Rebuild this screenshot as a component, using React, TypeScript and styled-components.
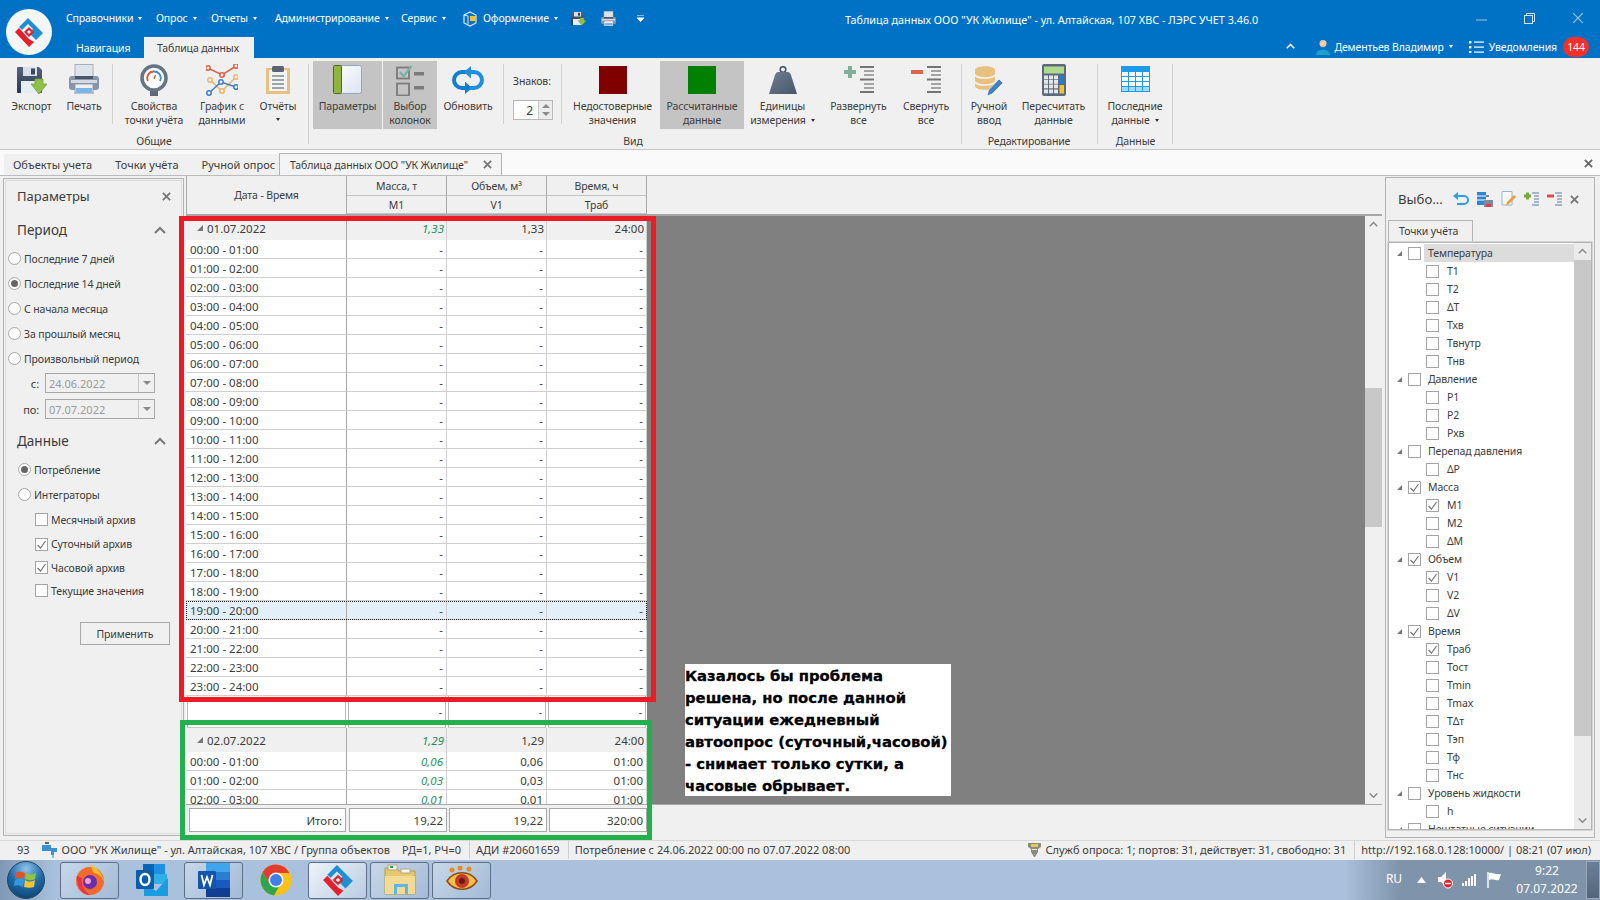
import React from 'react'
import styled, { createGlobalStyle } from 'styled-components'

const GlobalStyle = createGlobalStyle`
  html, body { margin: 0; padding: 0; background: #f0f0f0; }
  body { font-family: "Noto Sans", "Liberation Sans", sans-serif; font-size: 10.5px; letter-spacing: -0.12px; color: #3c3c3c; }
  * { box-sizing: border-box; }
`

const Root = styled.div`
  position: relative;
  width: 1600px;
  height: 900px;
  overflow: hidden;
  display: flex;
  flex-direction: column;
`

/* ---------- title bar ---------- */

const TitleBar = styled.header`
  position: relative;
  height: 58px;
  flex: none;
  background: #0072c6;
  color: #fff;
  display: flex;
  flex-direction: column;
`

const LogoCircle = styled.div`
  position: absolute;
  left: 6px;
  top: 9px;
  width: 46px;
  height: 46px;
  border-radius: 50%;
  background: #f4f6f8;
  display: flex;
  align-items: center;
  justify-content: center;
`

const TopRow = styled.div`
  height: 37px;
  display: flex;
  align-items: center;
  padding-left: 66px;
  position: relative;
`

const MenuItem = styled.span<{ $w: number }>`
  width: ${p => p.$w}px;
  flex: none;
  white-space: nowrap;
  padding-bottom: 1px;
`

const Caret = styled.i`
  display: inline-block;
  margin-left: 5px;
  vertical-align: 2px;
  border-left: 2.5px solid transparent;
  border-right: 2.5px solid transparent;
  border-top: 3px solid currentColor;
`

const QatIcon = styled.span<{ $w: number }>`
  width: ${p => p.$w}px;
  flex: none;
  display: flex;
  align-items: center;
`

const WindowTitle = styled.div`
  position: absolute;
  left: 845px;
  top: 12px;
  white-space: nowrap;
  font-size: 10.8px;
  letter-spacing: 0;
`

const WindowButtons = styled.div`
  position: absolute;
  right: 16px;
  top: 12px;
  display: flex;
  gap: 37px;
  align-items: center;
`

const TabRow = styled.div`
  height: 21px;
  display: flex;
  align-items: flex-end;
  padding-left: 76px;
`

const RibbonTab = styled.div<{ $active?: boolean }>`
  height: 21px;
  line-height: 23px;
  padding: 0 13px;
  margin-left: ${p => (p.$active ? '14px' : '0')};
  ${p => (p.$active ? 'background: #f0f0f0; color: #3c3c3c; width: 110px;' : 'padding: 0; color: #fff; width: 54px;')}
  white-space: nowrap;
`

const UserArea = styled.div`
  margin-left: auto;
  height: 21px;
  display: flex;
  align-items: center;
  padding-right: 11px;
  position: relative;
  top: -1px;
  white-space: nowrap;
`

const Spacer = styled.span<{ $w: number }>`
  width: ${p => p.$w}px;
  flex: none;
`

const Badge = styled.span`
  width: 26px;
  height: 20px;
  border-radius: 10px;
  background: #f3302a;
  color: #fff;
  text-align: center;
  line-height: 20px;
  margin-left: 6px;
`

/* ---------- ribbon ---------- */

const Ribbon = styled.section`
  height: 92px;
  flex: none;
  background: #f0f0f0;
  display: flex;
  padding-left: 4px;
  border-bottom: 1px solid #c6c6c6;
`

const RibbonGroup = styled.div<{ $w: number }>`
  width: ${p => p.$w}px;
  flex: none;
  position: relative;
  display: flex;
  flex-direction: column;
  &::after {
    content: '';
    position: absolute;
    right: 0;
    top: 6px;
    height: 80px;
    width: 1px;
    background: #d2d2d2;
  }
`

const GroupItems = styled.div`
  height: 71px;
  padding-top: 3px;
  display: flex;
  align-items: stretch;
`

const GroupLabel = styled.div<{ $pr?: number }>`
  text-align: center;
  line-height: 14px;
  margin-top: 5px;
  padding-right: ${p => p.$pr ?? 0}px;
`

const RibbonItem = styled.div<{ $w: number; $active?: boolean; $ml?: number }>`
  width: ${p => p.$w}px;
  margin-left: ${p => p.$ml ?? 0}px;
  flex: none;
  height: 68px;
  display: flex;
  flex-direction: column;
  align-items: center;
  background: ${p => (p.$active ? '#c4c4c4' : 'transparent')};
  text-align: center;
  line-height: 13.5px;
  white-space: nowrap;
`

const ItemIcon = styled.div<{ $pt?: number }>`
  height: 39px;
  flex: none;
  display: flex;
  align-items: flex-start;
  padding-top: ${p => p.$pt ?? 3}px;
`

const ItemSeparator = styled.div<{ $ml: number; $mr: number }>`
  width: 1px;
  height: 60px;
  margin: 3px ${p => p.$mr}px 0 ${p => p.$ml}px;
  background: #d2d2d2;
  flex: none;
`

const SignsBox = styled.div`
  width: 47px;
  padding: 13px 0 0 4px;
  flex: none;
  line-height: 14px;
`

const SpinBox = styled.div`
  margin: 12px 0 0 0;
  width: 40px;
  height: 20px;
  border: 1px solid #b8b8b8;
  background: #fff;
  display: flex;
`

const SpinValue = styled.span`
  flex: 1;
  text-align: right;
  padding-right: 5px;
  font-size: 12px;
  line-height: 19px;
`

const SpinArrows = styled.div`
  width: 14px;
  border-left: 1px solid #c8c8c8;
  background: #ececec;
  display: flex;
  flex-direction: column;
  align-items: center;
  justify-content: space-evenly;
`

const Arrow = styled.i<{ $down?: boolean }>`
  display: block;
  border-left: 4px solid transparent;
  border-right: 4px solid transparent;
  ${p => (p.$down ? 'border-top: 4px solid #8a8a8a;' : 'border-bottom: 4px solid #8a8a8a;')}
`

const Square = styled.div<{ $c: string }>`
  width: 28px;
  height: 28px;
  background: ${p => p.$c};
`

/* ---------- document tabs ---------- */

const DocTabs = styled.nav`
  height: 25px;
  flex: none;
  background: #fafafa;
  display: flex;
  align-items: flex-end;
  padding-left: 4px;
  position: relative;
`

const InactiveTabs = styled.div`
  height: 21px;
  width: 275px;
  background: #f0f0f0;
  display: flex;
  align-items: center;
  padding-left: 9px;
  gap: 23px;
  white-space: nowrap;
  font-size: 11px;
  letter-spacing: 0;
`

const ActiveTab = styled.div`
  height: 22px;
  width: 223px;
  background: #f4f4f4;
  border: 1px solid #b4b4b4;
  border-bottom: none;
  display: flex;
  align-items: center;
  padding-left: 10px;
  white-space: nowrap;
  justify-content: space-between;
  padding-right: 9px;
`

const BarClose = styled.span`
  position: absolute;
  right: 7px;
  top: 9px;
  display: flex;
`

/* ---------- main area ---------- */

const Main = styled.main`
  height: 665px;
  flex: none;
  display: flex;
  border-top: 1px solid #bcbcbc;
  background: #f0f0f0;
`

const ParamsPanel = styled.aside`
  width: 181px;
  margin: 2px 2px 4px 3px;
  flex: none;
  border: 1px solid #b4b4b4;
  outline: 1px solid #dcdcdc;
  outline-offset: -3px;
`

const PanelTitle = styled.div`
  height: 34px;
  display: flex;
  align-items: center;
  justify-content: space-between;
  padding: 0 12px 0 13px;
  font-size: 13px;
  letter-spacing: 0;
`

const SectionHead = styled.div<{ $mt?: number }>`
  height: 30px;
  margin-top: ${p => p.$mt ?? 0}px;
  display: flex;
  align-items: center;
  justify-content: space-between;
  padding: 0 17px 2px 13px;
  font-size: 13.5px;
  letter-spacing: 0;
`

const OptionRow = styled.div<{ $h?: number; $pl: number }>`
  height: ${p => p.$h ?? 25}px;
  padding-left: ${p => p.$pl}px;
  display: flex;
  align-items: center;
  gap: 3px;
  white-space: nowrap;
`

const Radio = styled.span<{ $on?: boolean }>`
  width: 13px;
  height: 13px;
  border-radius: 50%;
  border: 1px solid #a8a8a8;
  background: #fff;
  flex: none;
  display: flex;
  align-items: center;
  justify-content: center;
  &::after {
    content: '';
    width: 7px;
    height: 7px;
    border-radius: 50%;
    background: ${p => (p.$on ? '#666' : 'transparent')};
  }
`

const Box = styled.span`
  width: 13px;
  height: 13px;
  border: 1px solid #a4a4a4;
  background: #fff;
  flex: none;
  display: flex;
  align-items: center;
  justify-content: center;
`

const DateRow = styled.div<{ $mt: number }>`
  margin-top: ${p => p.$mt}px;
  height: 20px;
  display: flex;
  align-items: center;
  justify-content: flex-end;
  gap: 6px;
  padding-right: 28px;
  font-size: 11px;
`

const DateInput = styled.div`
  width: 110px;
  height: 20px;
  border: 1px solid #a8a8a8;
  display: flex;
  align-items: center;
  padding-left: 3px;
  color: #9a9a9a;
  background: #f0f0f0;
  font-size: 11px;
  letter-spacing: 0;
`

const DateDrop = styled.span`
  margin-left: auto;
  width: 16px;
  height: 18px;
  border-left: 1px solid #c8c8c8;
  display: flex;
  align-items: center;
  justify-content: center;
`

const ApplyButton = styled.button`
  display: block;
  margin: 20px 0 0 76px;
  width: 90px;
  height: 23px;
  border: 1px solid #a8a8a8;
  background: #f0f0f0;
  font: inherit;
  letter-spacing: inherit;
  color: inherit;
`

/* ---------- data grid ---------- */

const GridPane = styled.section`
  width: 1196px;
  margin-bottom: 5px;
  flex: none;
  display: flex;
  flex-direction: column;
`

const GridHead = styled.div`
  height: 40px;
  flex: none;
  display: grid;
  grid-template-columns: 161px 100px 100px 100px 1fr;
  grid-template-rows: 20px 18px;
  border-bottom: 2px solid #a8a8a8;
  background: #f0f0f0;
`

const HeadCell = styled.div<{ $span?: boolean }>`
  ${p => (p.$span ? 'grid-row: span 2;' : '')}
  display: flex;
  align-items: center;
  justify-content: center;
  border-right: 1px solid #a8a8a8;
  border-bottom: ${p => (p.$span ? 'none' : '1px solid #c4c4c4')};
  border-left: ${p => (p.$span ? '1px solid #a8a8a8' : 'none')};
`

const HeadFill = styled.div`
  grid-row: span 2;
`

const GridBody = styled.div`
  flex: 1;
  display: flex;
  min-height: 0;
  background: #808080;
`

const RowsClip = styled.div`
  flex: 1;
  height: 588px;
  overflow: hidden;
`

const DataRow = styled.div<{ $kind?: 'group' | 'row' | 'current' | 'summary'; $h?: number }>`
  width: 461px;
  height: ${p => p.$h ?? 19}px;
  display: grid;
  grid-template-columns: 161px 100px 100px 100px;
  background: ${p => (p.$kind === 'group' ? '#f0f0f0' : p.$kind === 'current' ? '#e3f0f9' : '#fff')};
  ${p => (p.$kind === 'current' ? 'outline: 1px dotted #222; outline-offset: -1px;' : '')}
`

const Cell = styled.div<{ $first?: boolean; $kind?: string; $green?: boolean }>`
  display: flex;
  align-items: center;
  justify-content: ${p => (p.$first ? 'flex-start' : 'flex-end')};
  padding: ${p => (p.$first ? (p.$kind === 'group' ? '0 0 0 11px' : '0 0 0 4px') : p.$kind === 'group' ? '0 2px 0 0' : '0 3px 0 0')};
  border-right: 1px solid ${p => (p.$first ? '#a8a8a8' : '#d0d0d0')};
  border-bottom: ${p => (p.$kind === 'group' ? 'none' : '1px solid #cfcfcf')};
  color: ${p => (p.$green ? '#1f8f5f' : 'inherit')};
  font-style: ${p => (p.$green ? 'italic' : 'normal')};
  font-size: 11.5px;
  letter-spacing: 0;
  gap: 4px;
  white-space: nowrap;
`

const SummaryCell = styled.div`
  margin: 0 1px;
  border-left: 1px solid #b8b8b8;
  border-right: 1px solid #b8b8b8;
  border-bottom: 1px solid #c8c8c8;
  display: flex;
  align-items: center;
  justify-content: flex-end;
  padding-right: 3px;
`

const GroupArrow = styled.i`
  display: block;
  width: 0;
  height: 0;
  border-left: 6px solid transparent;
  border-bottom: 6px solid #777;
`

const VScroll = styled.div<{ $w: number; $bg?: string }>`
  width: ${p => p.$w}px;
  flex: none;
  background: ${p => p.$bg ?? '#f0f0f0'};
  display: flex;
  flex-direction: column;
  align-items: stretch;
`

const ScrollArrow = styled.div`
  height: 17px;
  display: flex;
  align-items: center;
  justify-content: center;
  flex: none;
`

const ScrollTrack = styled.div<{ $top: number; $h: number }>`
  flex: 1;
  padding-top: ${p => p.$top}px;
  & > div { height: ${p => p.$h}px; background: #c8c8c8; }
`

const GridFoot = styled.div`
  height: 31px;
  flex: none;
  background: #f0f0f0;
  border-top: 1px solid #a8a8a8;
  padding-top: 3px;
  display: flex;
`

const FootCell = styled.div<{ $w: number; $ml: number }>`
  width: ${p => p.$w}px;
  margin-left: ${p => p.$ml}px;
  height: 24px;
  background: #fff;
  border: 1px solid #a8a8a8;
  display: flex;
  align-items: center;
  justify-content: flex-end;
  padding-right: 3px;
  font-size: 11.5px;
  letter-spacing: 0;
`

/* ---------- right panel ---------- */

const ChooserPanel = styled.aside`
  width: 210px;
  margin: 1px 5px 2px 3px;
  flex: none;
  border: 1px solid #b4b4b4;
  display: flex;
  flex-direction: column;
  padding: 0 2px;
`

const ChooserHead = styled.div`
  height: 42px;
  flex: none;
  display: flex;
  align-items: center;
  padding-left: 10px;
  font-size: 13.2px;
  letter-spacing: 0;
  position: relative;
`

const ChooserTools = styled.div`
  position: absolute;
  left: 65px;
  top: 13px;
  display: flex;
  gap: 8px;
  align-items: center;
`

const ChooserTab = styled.div`
  width: 85px;
  height: 22px;
  border: 1px solid #b4b4b4;
  border-bottom: none;
  padding-left: 10px;
  line-height: 21px;
  flex: none;
`

const TreeFrame = styled.div`
  height: 588px;
  flex: none;
  border: 1px solid #b4b4b4;
  outline: 1px solid #d4d4d4;
  background: #fff;
  display: flex;
  overflow: hidden;
`

const TreeRows = styled.div`
  flex: 1;
  padding-top: 1px;
  overflow: hidden;
`

const TreeRow = styled.div<{ $child?: boolean; $sel?: boolean }>`
  height: 18px;
  display: flex;
  align-items: center;
  padding-left: ${p => (p.$child ? '37px' : '8px')};
  white-space: nowrap;
  & > b {
    font-weight: normal;
    flex: 1;
    padding-left: ${p => (p.$sel ? '4px' : '0')};
    margin-left: ${p => (p.$sel ? '3px' : p.$child ? '8px' : '7px')};
    line-height: 18px;
    background: ${p => (p.$sel ? '#dcdcdc' : 'transparent')};
  }
`

const TreeArrow = styled(GroupArrow)`
  border-left-width: 5px;
  border-bottom-width: 5px;
  margin-right: 6px;
`

/* ---------- status + task bar ---------- */

const StatusBar = styled.footer`
  height: 20px;
  flex: none;
  background: #f0f0f0;
  border-top: 1px solid #d8d8d8;
  display: flex;
  align-items: center;
  white-space: nowrap;
  padding: 0 9px 2px 0;
  font-size: 11px;
  letter-spacing: 0;
`

const StatusItem = styled.span<{ $ml?: number; $sep?: boolean; $push?: boolean }>`
  margin-left: ${p => (p.$push ? 'auto' : `${p.$ml ?? 0}px`)};
  flex: none;
  display: flex;
  align-items: center;
  gap: 5px;
  height: 19px;
  ${p => (p.$sep ? 'border-left: 1px solid #cfcfcf; padding-left: 6px;' : '')}
`

const Taskbar = styled.div`
  height: 40px;
  flex: none;
  background: linear-gradient(to right, #7e98b6 0, #a9c1dc 56px, #a9c1dc 1345px, #7f93ab 1400px);
  position: relative;
  display: flex;
  align-items: center;
`

const StartOrb = styled.div`
  width: 60px;
  flex: none;
  display: flex;
  justify-content: center;
  padding-right: 9px;
`

const TaskButton = styled.div<{ $bare?: boolean; $lit?: boolean }>`
  width: 59px;
  height: 37px;
  margin-right: 3px;
  flex: none;
  border-radius: 3px;
  display: flex;
  align-items: center;
  justify-content: center;
  ${p =>
    p.$bare
      ? ''
      : `border: 1px solid #5d6f86; background: linear-gradient(135deg, ${p.$lit ? '#eef3f9, #b9cde3' : '#c7d7e9, #a3bbd6'});`}
`

const Tray = styled.div`
  margin-left: auto;
  display: flex;
  align-items: center;
  color: #fff;
  height: 40px;
`

const TrayLang = styled.span`
  font-size: 12px;
  margin: -4px 15px 0 0;
`

const TrayArrow = styled.svg`
  margin-right: 11px;
`

const TrayClock = styled.div`
  width: 78px;
  text-align: center;
  line-height: 18px;
  font-size: 12px;
  letter-spacing: 0;
`

const ShowDesktop = styled.div`
  width: 14px;
  height: 38px;
  background: linear-gradient(#6b7f97, #54667c);
  border: 1px solid #9aaabc;
`

/* ---------- overlays ---------- */

const Frame = styled.div<{ $c: string; $l: number; $t: number; $w: number; $h: number }>`
  position: absolute;
  left: ${p => p.$l}px;
  top: ${p => p.$t}px;
  width: ${p => p.$w}px;
  height: ${p => p.$h}px;
  border: 5px solid ${p => p.$c};
  pointer-events: none;
`

const Note = styled.div`
  position: absolute;
  left: 685px;
  top: 664px;
  width: 266px;
  height: 132px;
  padding-top: 1px;
  background: #fff;
  color: #000;
  font-family: "DejaVu Sans", "Liberation Sans", sans-serif;
  font-weight: 700;
  font-size: 14.8px;
  letter-spacing: 0;
  line-height: 22px;
  white-space: pre;
  -webkit-text-stroke: 0.3px #000;
`

/* ---------- icons ---------- */

const LersMark = ({ s = 30 }: { s?: number }) => (
  <svg width={s} height={s} viewBox="0 0 30 30">
    <path d="M14 1 L29 16 L22 23 L15 16 L19 12 L14 7 L8 13 L5 10 Z" fill="#1e8fd0" />
    <path d="M1 15 L5 11 L15 22 L20 25 L15 30 Z" fill="#e4202c" />
    <path d="M15 10 L20 15 L15 20 L10 15 Z" fill="#e4202c" />
    <path d="M15 13 L17 15 L15 17 L13 15 Z" fill="#fff" />
  </svg>
)

const FloppyIcon = ({ s = 30 }: { s?: number }) => (
  <svg width={s} height={s * 0.9} viewBox="0 0 30 27">
    <defs>
      <linearGradient id="fl" x1="0" x2="0" y1="0" y2="1">
        <stop offset="0" stopColor="#56627a" />
        <stop offset="1" stopColor="#2c3850" />
      </linearGradient>
    </defs>
    <path d="M0 1 Q0 0 1 0 H22 L25 3 V25 Q25 26 24 26 H1 Q0 26 0 25 Z" fill="url(#fl)" />
    <rect x="6" y="0" width="14" height="9" fill="#d8dfe8" />
    <rect x="14" y="1.5" width="4" height="6" fill="#3c4860" />
    <rect x="4" y="14" width="17" height="12" fill="#e7edf5" />
    <path d="M18 12 H26 V17 H30 L22 27 L14 17 H18 Z" fill="#8fc04a" stroke="#76a338" strokeWidth=".8" />
  </svg>
)

const PrinterIcon = ({ s = 30 }: { s?: number }) => (
  <svg width={s} height={s} viewBox="0 0 30 30">
    <rect x="6" y="0.5" width="18" height="13" fill="#dde3ea" stroke="#a6b0bd" />
    <rect x="0" y="12" width="30" height="14" rx="3" fill="#8a96a8" />
    <rect x="6" y="12" width="18" height="3" fill="#4c5668" />
    <rect x="2" y="16" width="26" height="3" fill="#d3d9e2" />
    <rect x="6" y="20" width="18" height="10" fill="#eef2f6" stroke="#8d98a6" />
    <rect x="7" y="24" width="16" height="5" fill="#7db5e4" />
  </svg>
)

const GaugeIcon = () => (
  <svg width="28" height="32" viewBox="0 0 28 32">
    <path d="M10 24 H18 V32 H10 Z" fill="#5c6978" />
    <circle cx="14" cy="14" r="12" fill="#fff" stroke="#667483" strokeWidth="3.5" />
    <path d="M8 17 A6.5 6.5 0 0 1 14 7.5" fill="none" stroke="#e0563c" strokeWidth="1.8" />
    <path d="M14 7.5 A6.5 6.5 0 0 1 20 17" fill="none" stroke="#3f8ecb" strokeWidth="1.8" />
    <path d="M14 15 L15.5 11" stroke="#d05a44" strokeWidth="1.4" />
  </svg>
)

const ChartIcon = () => (
  <svg width="32" height="32" viewBox="0 0 32 32" fill="none" strokeWidth="1.5">
    <path d="M2 4 L16 11 L30 2" stroke="#dd6245" />
    <path d="M4 16 L16 27 L30 13" stroke="#efb469" />
    <path d="M3 29 L15 18 L30 23" stroke="#3f7fbf" />
    {[[4, 16], [16, 27], [30, 13]].map(([x, y]) => <circle key={x} cx={x} cy={y} r="2.2" fill="#f0f0f0" stroke="#efb469" />)}
    {[[2, 4], [16, 11], [30, 2]].map(([x, y]) => <circle key={x} cx={x} cy={y} r="2.2" fill="#f0f0f0" stroke="#dd6245" />)}
    {[[3, 29], [15, 18], [30, 23]].map(([x, y]) => <circle key={x} cx={x} cy={y} r="2.2" fill="#f0f0f0" stroke="#3f7fbf" />)}
  </svg>
)

const ClipboardIcon = () => (
  <svg width="24" height="28" viewBox="0 0 24 28">
    <rect x="0" y="2" width="24" height="26" fill="#e9c07f" />
    <rect x="3" y="4" width="18" height="21" fill="#f4f4f2" />
    <rect x="6" y="0" width="12" height="6" rx="1.5" fill="#5b6572" />
    <path d="M6 10 H18 M6 14 H18 M6 18 H18 M6 22 H18" stroke="#7f8994" strokeWidth="1.6" />
  </svg>
)

const PanelIcon = () => (
  <svg width="29" height="29" viewBox="0 0 29 29">
    <defs>
      <linearGradient id="pn" x1="0" x2="1" y1="0" y2="1">
        <stop offset="0" stopColor="#ffffff" />
        <stop offset="1" stopColor="#dbe4f2" />
      </linearGradient>
    </defs>
    <rect x="0.5" y="0.5" width="28" height="28" rx="2" fill="url(#pn)" stroke="#94a8c6" />
    <rect x="0.5" y="0.5" width="8" height="28" rx="1" fill="#8fb53e" stroke="#4f6a20" />
  </svg>
)

const ColumnsIcon = () => (
  <svg width="28" height="31" viewBox="0 0 28 31" fill="none">
    <rect x="1" y="2.5" width="12" height="11" stroke="#7a7a7a" strokeWidth="1.8" />
    <path d="M4 7 L7.5 11.5 L15.5 1" stroke="#79b0a6" strokeWidth="2.2" />
    <rect x="18" y="7" width="10" height="3.5" fill="#7a7a7a" />
    <rect x="1" y="18.5" width="12" height="12" stroke="#7a7a7a" strokeWidth="1.8" />
    <rect x="18" y="21" width="10" height="3.5" fill="#7a7a7a" />
  </svg>
)

const RefreshIcon = () => (
  <svg width="32" height="28" viewBox="0 0 32 28" fill="none">
    <path d="M14 6 H10 A8 8 0 0 0 10 22 H14" stroke="#0f7fd1" strokeWidth="4" />
    <path d="M13 15.5 L20 22 L13 28 Z" fill="#0f7fd1" />
    <path d="M18 22 H22 A8 8 0 0 0 22 6 H18" stroke="#1f90e0" strokeWidth="4" />
    <path d="M19 0 L12 6 L19 12.5 Z" fill="#1f90e0" />
  </svg>
)

const WeightIcon = () => (
  <svg width="28" height="28" viewBox="0 0 28 28">
    <defs>
      <linearGradient id="wg" x1="0" x2="1" y1="0" y2="1">
        <stop offset="0" stopColor="#6f7f90" />
        <stop offset="1" stopColor="#47566a" />
      </linearGradient>
    </defs>
    <circle cx="14" cy="3.5" r="2.8" fill="none" stroke="#4c5664" strokeWidth="1.6" />
    <path d="M9 6 H19 Q21 6 22 9 L28 28 H0 L6 9 Q7 6 9 6 Z" fill="url(#wg)" />
  </svg>
)

const LinesIcon = ({ minus }: { minus?: boolean }) => (
  <svg width="30" height="27" viewBox="0 0 30 27">
    {minus
      ? <rect x="0" y="4" width="12" height="4" fill="#dc6647" />
      : <path d="M4 0 H8 V4 H12 V8 H8 V12 H4 V8 H0 V4 H4 Z" fill="#7fb09c" />}
    {[0, 12.5, 25].map(y => <rect key={y} x="16" y={y} width="14" height="2" fill="#747474" />)}
    {[4, 8, 17, 21].map(y => <rect key={y} x="20" y={y} width="10" height="2" fill="#a4a4a4" />)}
  </svg>
)

const DbPencilIcon = () => (
  <svg width="28" height="30" viewBox="0 0 28 30">
    <path d="M0 4 C0 -1 20 -1 20 4 V20 C20 25 0 25 0 20 Z" fill="#e8c17f" />
    <path d="M0 9 C3 13 17 13 20 9 M0 16 C3 20 17 20 20 16" stroke="#f4f4f0" strokeWidth="1.6" fill="none" />
    <path d="M12 30 L13.5 24 L24 13 L28 17 L17 28 Z" fill="#3f82c4" stroke="#f0f0f0" strokeWidth=".8" />
  </svg>
)

const CalcIcon = () => (
  <svg width="24" height="32" viewBox="0 0 24 32">
    <rect width="24" height="32" rx="2" fill="#5c6a7a" />
    <rect x="2" y="2.5" width="20" height="7" fill="#aedb8e" />
    {[11.5, 16, 20.5, 25.5].map(y => [2, 7, 12].map(x => <rect key={x + '-' + y} x={x} y={y} width="4" height="3.8" fill="#e3e7ec" />))}
    <rect x="17.5" y="11.5" width="4.5" height="4" fill="#1d7fd0" />
    <rect x="17.5" y="16" width="4.5" height="4" fill="#1d7fd0" />
    <rect x="17.5" y="21" width="4.5" height="8.5" fill="#f3c230" />
  </svg>
)

const TableIcon = () => (
  <svg width="29" height="26" viewBox="0 0 29 26">
    <rect width="29" height="26" fill="#1e9be8" />
    {[6, 11, 16, 21].map(y => [1, 8, 15, 22].map(x => <rect key={x + '-' + y} x={x} y={y} width="6" height="4" fill={y > 16 ? '#a7d8f7' : '#f6fbff'} />))}
  </svg>
)

const CloseCross = ({ s = 9, c = '#666', w = 2 }: { s?: number; c?: string; w?: number }) => (
  <svg width={s} height={s} viewBox="0 0 10 10">
    <path d="M1 1 L9 9 M9 1 L1 9" stroke={c} strokeWidth={w} />
  </svg>
)

const Chevron = ({ down, c = '#777', w = 12 }: { down?: boolean; c?: string; w?: number }) => (
  <svg width={w} height={w * 0.7} viewBox="0 0 12 8.4">
    <path d={down ? 'M1 2 L6 7 L11 2' : 'M1 7 L6 2 L11 7'} fill="none" stroke={c} strokeWidth="2" />
  </svg>
)

const Tick = () => (
  <svg width="11" height="11" viewBox="0 0 11 11">
    <path d="M1.5 6 L4.5 9 L9.5 2" fill="none" stroke="#777" strokeWidth="1.2" />
  </svg>
)

const UserIcon = () => (
  <svg width="14" height="16" viewBox="0 0 14 16">
    <circle cx="7" cy="4.5" r="3.5" fill="#f3c9a0" />
    <path d="M0 16 C0 9 14 9 14 16 Z" fill="#1ea0c8" />
  </svg>
)

const ListIcon = () => (
  <svg width="15" height="12" viewBox="0 0 15 12" fill="#fff">
    {[0, 5, 10].map(y => (
      <g key={y}>
        <rect x="0" y={y} width="2.4" height="2.4" />
        <rect x="5" y={y + 0.5} width="10" height="1.2" />
      </g>
    ))}
  </svg>
)

const ThemeIcon = () => (
  <svg width="16" height="16" viewBox="0 0 16 16" fill="none">
    <path d="M2 4 L8 1 L14 4 V12 L8 15 L2 12 Z" stroke="#dce9f5" strokeWidth="1.2" />
    <path d="M6 5 V13 M2 4 L6 5" stroke="#dce9f5" strokeWidth="1" />
    <rect x="8" y="5" width="6" height="5" fill="#f2c230" />
  </svg>
)

const QatDrop = () => (
  <svg width="7" height="7" viewBox="0 0 7 7">
    <path d="M0 0 H7 M0 3 H7 L3.5 6.5 Z" stroke="#fff" fill="#fff" />
  </svg>
)

const MinimizeGlyph = () => (
  <svg width="11" height="11" viewBox="0 0 11 11"><path d="M0 7 H11" stroke="#9cc6e6" /></svg>
)

const RestoreGlyph = () => (
  <svg width="11" height="11" viewBox="0 0 11 11" fill="none" stroke="#cfe2f2">
    <rect x=".5" y="2.5" width="8" height="8" />
    <path d="M2.5 2.5 V.5 H10.5 V8.5 H8.5" />
  </svg>
)

const TapIcon = () => (
  <svg width="15" height="16" viewBox="0 0 15 16">
    <path d="M0 3 H9 V6 H15 V10 H12 V13 H9 V9 H0 Z" fill="#3e90d6" />
    <rect x="3" y="0" width="4" height="2" fill="#56606e" />
    <rect x="10" y="13" width="2" height="3" fill="#7dc0ee" />
  </svg>
)

const PortIcon = () => (
  <svg width="13" height="15" viewBox="0 0 13 15">
    <path d="M0 1 H13 V5 L10 7 V10 L7 15 H6 L3 10 V7 L0 5 Z" fill="#8d8d7c" />
    <rect x="3" y="2" width="7" height="3" fill="#e3c75e" />
    <rect x="4" y="7" width="5" height="1" fill="#e8e8e0" />
  </svg>
)

const UndoIcon = () => (
  <svg width="16" height="14" viewBox="0 0 16 14" fill="none">
    <path d="M2 4 H11 A4 4 0 0 1 11 12 H4" stroke="#2d9fe8" strokeWidth="2" />
    <path d="M5 0 V8 L0 4 Z" fill="#2d9fe8" />
  </svg>
)

const StackSaveIcon = () => (
  <svg width="16" height="15" viewBox="0 0 16 15">
    <rect x="0" y="0" width="9" height="13" fill="#2f86d0" />
    <path d="M0 4 H9 M0 8 H9" stroke="#fff" />
    <rect x="9" y="3" width="3" height="2" fill="#7a8494" />
    <rect x="7" y="8" width="9" height="7" fill="#808a98" />
    <rect x="9" y="12" width="5" height="3" fill="#d9414a" />
  </svg>
)

const NoteIcon = () => (
  <svg width="15" height="16" viewBox="0 0 15 16">
    <path d="M1 .5 H11 V14 H1 Z" fill="#f8fafc" stroke="#9fb2c6" />
    <path d="M5 14 L6 11 L13 4 L15 6 L8 13 Z" fill="#e5a23a" />
  </svg>
)

const SmallLines = ({ minus }: { minus?: boolean }) => (
  <svg width="15" height="14" viewBox="0 0 15 14">
    {minus
      ? <rect x="0" y="2.5" width="7" height="3" fill="#e0484a" />
      : <path d="M2 0.5 H5 V2.5 H7 V5.5 H5 V7.5 H2 V5.5 H0 V2.5 H2 Z" fill="#76a83a" />}
    <path d="M8 1 H15 M10 4 H15 M10 7 H15 M10 10 H15 M8 13 H15" stroke="#5a7ca6" />
  </svg>
)

const WinOrb = () => (
  <svg width="38" height="38" viewBox="0 0 38 38">
    <defs>
      <radialGradient id="orb" cx="0.5" cy="0.2" r="0.9">
        <stop offset="0" stopColor="#8fc4ea" />
        <stop offset="0.5" stopColor="#1f6aa8" />
        <stop offset="1" stopColor="#0b3a66" />
      </radialGradient>
    </defs>
    <circle cx="19" cy="19" r="18.5" fill="url(#orb)" stroke="#27475f" />
    <path d="M9 12 C12 10 15 11 18 12 L17 18 C14 17 11 16 8 18 Z" fill="#e5512b" />
    <path d="M19 12 C22 14 25 14 29 12 L28 18 C25 20 21 19 18 18 Z" fill="#8cc63f" />
    <path d="M8 19 C11 17 14 18 17 19 L16 26 C13 24 10 24 7 25 Z" fill="#2f9ae0" />
    <path d="M18 19 C21 21 25 21 28 19 L27 26 C24 27 20 27 17 26 Z" fill="#f7c62f" />
  </svg>
)

const FirefoxIcon = () => (
  <svg width="30" height="32" viewBox="0 0 30 32">
    <circle cx="15" cy="17" r="14" fill="#f36a2c" />
    <path d="M15 0 C22 4 28 10 29 18 C27 12 22 9 19 9 C17 6 16 3 15 0 Z" fill="#fbc02d" />
    <path d="M2 12 C1 20 6 31 15 31 C9 27 6 20 7 14 Z" fill="#e8304f" />
    <circle cx="15" cy="18" r="7" fill="#6a2fb0" />
    <circle cx="13" cy="17" r="3" fill="#f2a0c8" />
  </svg>
)

const OutlookIcon = () => (
  <svg width="32" height="32" viewBox="0 0 32 32">
    <rect x="7" y="0" width="11" height="10" fill="#0a64b4" />
    <rect x="18" y="0" width="11" height="10" fill="#1e90e0" />
    <rect x="7" y="10" width="11" height="10" fill="#0f76c8" />
    <rect x="18" y="10" width="13" height="10" fill="#31b0e8" />
    <path d="M8 20 L20 27 L32 14 V32 H8 Z" fill="#1a9ce0" />
    <rect x="0" y="6" width="18" height="19" rx="1" fill="#0d5ea8" />
    <ellipse cx="9" cy="15.5" rx="4.5" ry="5.5" fill="none" stroke="#fff" strokeWidth="2.4" />
  </svg>
)

const WordIcon = () => (
  <svg width="32" height="34" viewBox="0 0 32 34">
    <rect x="8" y="0" width="24" height="9" fill="#41a5ee" />
    <rect x="8" y="9" width="24" height="8" fill="#2b7cd3" />
    <rect x="8" y="17" width="24" height="8" fill="#185abd" />
    <rect x="8" y="25" width="24" height="9" fill="#103f91" />
    <rect x="0" y="8" width="18" height="18" rx="1" fill="#1554a8" />
    <path d="M3.5 12 L6 22 L9 14 L12 22 L14.5 12" fill="none" stroke="#fff" strokeWidth="1.8" />
  </svg>
)

const ChromeIcon = () => (
  <svg width="32" height="32" viewBox="0 0 32 32">
    <circle cx="16" cy="16" r="15.5" fill="#fbc116" />
    <path d="M16 .5 A15.5 15.5 0 0 0 2.6 8.2 L9 19 L16 9 H29.4 A15.5 15.5 0 0 0 16 .5 Z" fill="#e33b2e" />
    <path d="M2.6 8.2 A15.5 15.5 0 0 0 14 31.4 L20.5 20 L9 19 Z" fill="#2fa44f" />
    <circle cx="16" cy="16" r="7.5" fill="#fff" />
    <circle cx="16" cy="16" r="6" fill="#3f7fe8" />
  </svg>
)

const FolderIcon = () => (
  <svg width="32" height="32" viewBox="0 0 32 32">
    <path d="M1 4 H13 L15 7 H31 V30 H1 Z" fill="#e8c86c" stroke="#b89a44" />
    <rect x="4" y="1" width="9" height="5" fill="#f6f6f0" stroke="#b0a88a" />
    <rect x="6" y="2" width="3" height="2" fill="#3aa23c" />
    <rect x="17" y="5" width="9" height="4" fill="#f6f6f0" stroke="#b0a88a" />
    <path d="M1 12 H31 V30 H1 Z" fill="#f2dc94" />
    <path d="M10 30 V20 H24 V30 H21 V23 H13 V30 Z" fill="#5fb4e8" />
  </svg>
)

const XnIcon = () => (
  <svg width="32" height="28" viewBox="0 0 32 28">
    <path d="M1 15 C8 4 24 4 31 15 C24 26 8 26 1 15 Z" fill="#f4c04a" stroke="#8a4a10" strokeWidth="1.5" />
    <circle cx="16" cy="15" r="7" fill="#c23a2a" />
    <circle cx="16" cy="15" r="3" fill="#6a1a14" />
    <circle cx="6" cy="4" r="2.5" fill="#e88a20" />
    <circle cx="14" cy="2" r="2.5" fill="#e88a20" />
    <circle cx="23" cy="3" r="2.5" fill="#e88a20" />
  </svg>
)

const SpeakerIcon = () => (
  <svg width="16" height="18" viewBox="0 0 16 18">
    <path d="M1 6 H4 L9 1 V15 L4 11 H1 Z" fill="#fff" />
    <circle cx="11" cy="12.5" r="4.5" fill="#e0202c" stroke="#fff" />
    <path d="M8 12.5 H14" stroke="#fff" strokeWidth="1.4" />
  </svg>
)

const SignalIcon = () => (
  <svg width="15" height="14" viewBox="0 0 15 14" fill="#fff">
    <rect x="0" y="10" width="2" height="3" />
    <rect x="3" y="8" width="2" height="5" />
    <rect x="6" y="5" width="2" height="8" />
    <rect x="9" y="3" width="2" height="10" />
    <rect x="12" y="1" width="2" height="12" />
  </svg>
)

const FlagIcon = () => (
  <svg width="15" height="16" viewBox="0 0 15 16">
    <path d="M1 0 V16" stroke="#fff" strokeWidth="1.4" />
    <path d="M2 1 C6 0 8 3 14 2 L12 8 C8 9 6 6 2 8 Z" fill="#fff" />
  </svg>
)

/* ---------- data ---------- */

type RowData = { time: string; m?: string; v?: string; t?: string; current?: boolean }

const hours: RowData[] = Array.from({ length: 24 }, (_, i) => ({
  time: `${String(i).padStart(2, '0')}:00 - ${String(i + 1).padStart(2, '0')}:00`,
  current: i === 19,
}))

const nextDay: RowData[] = [
  { time: '00:00 - 01:00', m: '0,06', v: '0,06', t: '01:00' },
  { time: '01:00 - 02:00', m: '0,03', v: '0,03', t: '01:00' },
  { time: '02:00 - 03:00', m: '0,01', v: '0,01', t: '01:00' },
]

type TreeNode = { label: string; child?: boolean; checked?: boolean; sel?: boolean }

const parent = (label: string, checked = false, sel = false): TreeNode => ({ label, checked, sel })
const leaf = (label: string, checked = false): TreeNode => ({ label, child: true, checked })

const tree: TreeNode[] = [
  parent('Температура', false, true),
  leaf('T1'), leaf('T2'), leaf('ΔT'), leaf('Тхв'), leaf('Твнутр'), leaf('Тнв'),
  parent('Давление'),
  leaf('P1'), leaf('P2'), leaf('Pхв'),
  parent('Перепад давления'),
  leaf('ΔP'),
  parent('Масса', true),
  leaf('M1', true), leaf('M2'), leaf('ΔM'),
  parent('Объем', true),
  leaf('V1', true), leaf('V2'), leaf('ΔV'),
  parent('Время', true),
  leaf('Траб', true), leaf('Тост'), leaf('Tmin'), leaf('Tmax'), leaf('TΔт'), leaf('Тэп'), leaf('Тф'), leaf('Тнс'),
  parent('Уровень жидкости'),
  leaf('h'),
  parent('Нештатные ситуации'),
]

const noteText = `Казалось бы проблема
решена, но после данной
ситуации ежедневный
автоопрос (суточный,часовой)
- снимает только сутки, а
часовые обрывает.`

const GridRow = ({ row }: { row: RowData }) => (
  <DataRow $kind={row.current ? 'current' : 'row'}>
    <Cell $first>{row.time}</Cell>
    <Cell $green={!!row.m}>{row.m ?? '-'}</Cell>
    <Cell>{row.v ?? '-'}</Cell>
    <Cell>{row.t ?? '-'}</Cell>
  </DataRow>
)

const GroupRow = ({ date, m, v, t, h }: { date: string; m: string; v: string; t: string; h: number }) => (
  <DataRow $kind="group" $h={h}>
    <Cell $first $kind="group"><GroupArrow />{date}</Cell>
    <Cell $kind="group" $green>{m}</Cell>
    <Cell $kind="group">{v}</Cell>
    <Cell $kind="group">{t}</Cell>
  </DataRow>
)

const App = () => (
  <Root>
    <GlobalStyle />

    <TitleBar>
      <TopRow>
        <MenuItem $w={90}>Справочники<Caret /></MenuItem>
        <MenuItem $w={55}>Опрос<Caret /></MenuItem>
        <MenuItem $w={64}>Отчеты<Caret /></MenuItem>
        <MenuItem $w={126}>Администрирование<Caret /></MenuItem>
        <MenuItem $w={61}>Сервис<Caret /></MenuItem>
        <QatIcon $w={21}><ThemeIcon /></QatIcon>
        <MenuItem $w={88}>Оформление<Caret /></MenuItem>
        <QatIcon $w={30}><FloppyIcon s={15} /></QatIcon>
        <QatIcon $w={36}><PrinterIcon s={15} /></QatIcon>
        <QatIcon $w={10}><QatDrop /></QatIcon>
        <WindowTitle>Таблица данных ООО "УК Жилище" - ул. Алтайская, 107 ХВС - ЛЭРС УЧЕТ 3.46.0</WindowTitle>
        <WindowButtons>
          <MinimizeGlyph />
          <RestoreGlyph />
          <CloseCross s={12} c="#9cc6e6" w={1} />
        </WindowButtons>
      </TopRow>
      <TabRow>
        <RibbonTab>Навигация</RibbonTab>
        <RibbonTab $active>Таблица данных</RibbonTab>
        <UserArea>
          <Chevron c="#fff" w={9} />
          <Spacer $w={21} />
          <UserIcon />
          <Spacer $w={4} />
          Дементьев Владимир<Caret />
          <Spacer $w={16} />
          <ListIcon />
          <Spacer $w={5} />
          Уведомления
          <Badge>144</Badge>
        </UserArea>
      </TabRow>
      <LogoCircle><LersMark /></LogoCircle>
    </TitleBar>

    <Ribbon>
      <RibbonGroup $w={305}>
        <GroupItems>
          <RibbonItem $w={53} $ml={1}><ItemIcon $pt={6}><FloppyIcon /></ItemIcon>Экспорт</RibbonItem>
          <RibbonItem $w={52}><ItemIcon><PrinterIcon /></ItemIcon>Печать</RibbonItem>
          <ItemSeparator $ml={2} $mr={4} />
          <RibbonItem $w={74}><ItemIcon><GaugeIcon /></ItemIcon>Свойства<br />точки учёта</RibbonItem>
          <RibbonItem $w={62}><ItemIcon><ChartIcon /></ItemIcon>График с<br />данными</RibbonItem>
          <RibbonItem $w={50}><ItemIcon $pt={5}><ClipboardIcon /></ItemIcon>Отчёты<br /><Caret style={{ margin: '4px 0 0', color: '#333' }} /></RibbonItem>
        </GroupItems>
        <GroupLabel $pr={5}>Общие</GroupLabel>
      </RibbonGroup>

      <RibbonGroup $w={653}>
        <GroupItems>
          <RibbonItem $w={69} $ml={4} $active><ItemIcon $pt={4}><PanelIcon /></ItemIcon>Параметры</RibbonItem>
          <RibbonItem $w={54} $ml={1} $active><ItemIcon $pt={4}><ColumnsIcon /></ItemIcon>Выбор<br />колонок</RibbonItem>
          <RibbonItem $w={62}><ItemIcon $pt={5}><RefreshIcon /></ItemIcon>Обновить</RibbonItem>
          <ItemSeparator $ml={4} $mr={5} />
          <SignsBox>
            Знаков:
            <SpinBox>
              <SpinValue>2</SpinValue>
              <SpinArrows><Arrow /><Arrow $down /></SpinArrows>
            </SpinBox>
          </SignsBox>
          <ItemSeparator $ml={5} $mr={3} />
          <RibbonItem $w={95}><ItemIcon $pt={5}><Square $c="#800000" /></ItemIcon>Недостоверные<br />значения</RibbonItem>
          <RibbonItem $w={84} $active><ItemIcon $pt={5}><Square $c="#008000" /></ItemIcon>Рассчитанные<br />данные</RibbonItem>
          <RibbonItem $w={77}><ItemIcon $pt={5}><WeightIcon /></ItemIcon>Единицы<br /><span>измерения<Caret style={{ color: '#333' }} /></span></RibbonItem>
          <RibbonItem $w={75}><ItemIcon $pt={5}><LinesIcon /></ItemIcon>Развернуть<br />все</RibbonItem>
          <RibbonItem $w={60}><ItemIcon $pt={5}><LinesIcon minus /></ItemIcon>Свернуть<br />все</RibbonItem>
        </GroupItems>
        <GroupLabel $pr={5}>Вид</GroupLabel>
      </RibbonGroup>

      <RibbonGroup $w={136}>
        <GroupItems>
          <RibbonItem $w={46} $ml={4}><ItemIcon $pt={5}><DbPencilIcon /></ItemIcon>Ручной<br />ввод</RibbonItem>
          <RibbonItem $w={83}><ItemIcon><CalcIcon /></ItemIcon>Пересчитать<br />данные</RibbonItem>
        </GroupItems>
        <GroupLabel $pr={2}>Редактирование</GroupLabel>
      </RibbonGroup>

      <RibbonGroup $w={75}>
        <GroupItems>
          <RibbonItem $w={70} $ml={2}><ItemIcon $pt={5}><TableIcon /></ItemIcon>Последние<br /><span>данные<Caret style={{ color: '#333' }} /></span></RibbonItem>
        </GroupItems>
        <GroupLabel>Данные</GroupLabel>
      </RibbonGroup>
    </Ribbon>

    <DocTabs>
      <InactiveTabs>
        <span>Объекты учета</span>
        <span>Точки учёта</span>
        <span>Ручной опрос</span>
      </InactiveTabs>
      <ActiveTab>
        Таблица данных ООО "УК Жилище"
        <CloseCross s={9} c="#777" />
      </ActiveTab>
      <BarClose><CloseCross s={9} c="#666" /></BarClose>
    </DocTabs>

    <Main>
      <ParamsPanel>
        <PanelTitle>Параметры<CloseCross s={9} c="#777" /></PanelTitle>
        <SectionHead $mt={3}>Период<Chevron /></SectionHead>
        <OptionRow $pl={4}><Radio />Последние 7 дней</OptionRow>
        <OptionRow $pl={4}><Radio $on />Последние 14 дней</OptionRow>
        <OptionRow $pl={4}><Radio />С начала месяца</OptionRow>
        <OptionRow $pl={4}><Radio />За прошлый месяц</OptionRow>
        <OptionRow $pl={4}><Radio />Произвольный период</OptionRow>
        <DateRow $mt={2}>с:<DateInput>24.06.2022<DateDrop><Arrow $down /></DateDrop></DateInput></DateRow>
        <DateRow $mt={6}>по:<DateInput>07.07.2022<DateDrop><Arrow $down /></DateDrop></DateInput></DateRow>
        <SectionHead $mt={8}>Данные<Chevron /></SectionHead>
        <OptionRow $pl={14}><Radio $on />Потребление</OptionRow>
        <OptionRow $pl={14}><Radio />Интеграторы</OptionRow>
        <OptionRow $pl={31}><Box />Месячный архив</OptionRow>
        <OptionRow $pl={31} $h={24}><Box><Tick /></Box>Суточный архив</OptionRow>
        <OptionRow $pl={31} $h={23}><Box><Tick /></Box>Часовой архив</OptionRow>
        <OptionRow $pl={31} $h={23}><Box />Текущие значения</OptionRow>
        <ApplyButton>Применить</ApplyButton>
      </ParamsPanel>

      <GridPane>
        <GridHead>
          <HeadCell $span>Дата - Время</HeadCell>
          <HeadCell>Масса, т</HeadCell>
          <HeadCell>Объем, м³</HeadCell>
          <HeadCell>Время, ч</HeadCell>
          <HeadFill />
          <HeadCell>M1</HeadCell>
          <HeadCell>V1</HeadCell>
          <HeadCell>Траб</HeadCell>
        </GridHead>
        <GridBody>
          <RowsClip>
            <GroupRow date="01.07.2022" m="1,33" v="1,33" t="24:00" h={24} />
            {hours.map(row => <GridRow key={row.time} row={row} />)}
            <DataRow $kind="summary" $h={32}>
              <SummaryCell />
              <SummaryCell>-</SummaryCell>
              <SummaryCell>-</SummaryCell>
              <SummaryCell>-</SummaryCell>
            </DataRow>
            <GroupRow date="02.07.2022" m="1,29" v="1,29" t="24:00" h={24} />
            {nextDay.map(row => <GridRow key={row.time} row={row} />)}
          </RowsClip>
          <VScroll $w={17}>
            <ScrollArrow><Chevron w={9} c="#8a8a8a" /></ScrollArrow>
            <ScrollTrack $top={155} $h={139}><div /></ScrollTrack>
            <ScrollArrow><Chevron down w={9} c="#8a8a8a" /></ScrollArrow>
          </VScroll>
        </GridBody>
        <GridFoot>
          <FootCell $w={157} $ml={3}>Итого:</FootCell>
          <FootCell $w={98} $ml={3}>19,22</FootCell>
          <FootCell $w={98} $ml={2}>19,22</FootCell>
          <FootCell $w={98} $ml={2}>320:00</FootCell>
        </GridFoot>
      </GridPane>

      <ChooserPanel>
        <ChooserHead>
          Выбо...
          <ChooserTools>
            <UndoIcon />
            <StackSaveIcon />
            <NoteIcon />
            <SmallLines />
            <SmallLines minus />
            <CloseCross s={9} c="#777" />
          </ChooserTools>
        </ChooserHead>
        <ChooserTab>Точки учёта</ChooserTab>
        <TreeFrame>
          <TreeRows>
            {tree.map(n => (
              <TreeRow key={n.label} $child={n.child} $sel={n.sel}>
                {!n.child && <TreeArrow />}
                <Box>{n.checked && <Tick />}</Box>
                <b>{n.label}</b>
              </TreeRow>
            ))}
          </TreeRows>
          <VScroll $w={17} $bg="#ebebeb">
            <ScrollArrow><Chevron w={9} c="#8a8a8a" /></ScrollArrow>
            <ScrollTrack $top={0} $h={476}><div /></ScrollTrack>
            <ScrollArrow><Chevron down w={9} c="#8a8a8a" /></ScrollArrow>
          </VScroll>
        </TreeFrame>
      </ChooserPanel>
    </Main>

    <StatusBar>
      <StatusItem $ml={17}>93</StatusItem>
      <StatusItem $ml={12}><TapIcon />ООО "УК Жилище" - ул. Алтайская, 107 ХВС / Группа объектов</StatusItem>
      <StatusItem $ml={12}>РД=1, РЧ=0</StatusItem>
      <StatusItem $ml={8} $sep>АДИ #20601659</StatusItem>
      <StatusItem $ml={8} $sep>Потребление с 24.06.2022 00:00 по 07.07.2022 08:00</StatusItem>
      <StatusItem $push><PortIcon />Служб опроса: 1; портов: 31, действует: 31, свободно: 31</StatusItem>
      <StatusItem $ml={8} $sep>http://192.168.0.128:10000/ | 08:21 (07 июл)</StatusItem>
    </StatusBar>

    <Taskbar>
      <StartOrb><WinOrb /></StartOrb>
      <TaskButton><FirefoxIcon /></TaskButton>
      <TaskButton $bare><OutlookIcon /></TaskButton>
      <TaskButton><WordIcon /></TaskButton>
      <TaskButton $bare><ChromeIcon /></TaskButton>
      <TaskButton $lit><LersMark s={32} /></TaskButton>
      <TaskButton><FolderIcon /></TaskButton>
      <TaskButton><XnIcon /></TaskButton>
      <Tray>
        <TrayLang>RU</TrayLang>
        <TrayArrow width="9" height="6" viewBox="0 0 9 6"><path d="M0 6 L4.5 0 L9 6 Z" fill="#fff" /></TrayArrow>
        <SpeakerIcon />
        <Spacer $w={9} />
        <SignalIcon />
        <Spacer $w={10} />
        <FlagIcon />
        <Spacer $w={6} />
        <TrayClock>9:22<br />07.07.2022</TrayClock>
        <ShowDesktop />
      </Tray>
    </Taskbar>

    <Frame $c="#ed1c24" $l={179} $t={216} $w={477} $h={486} />
    <Frame $c="#22b14c" $l={180} $t={720} $w={472} $h={120} />
    <Note>{noteText}</Note>
  </Root>
)

export default App
